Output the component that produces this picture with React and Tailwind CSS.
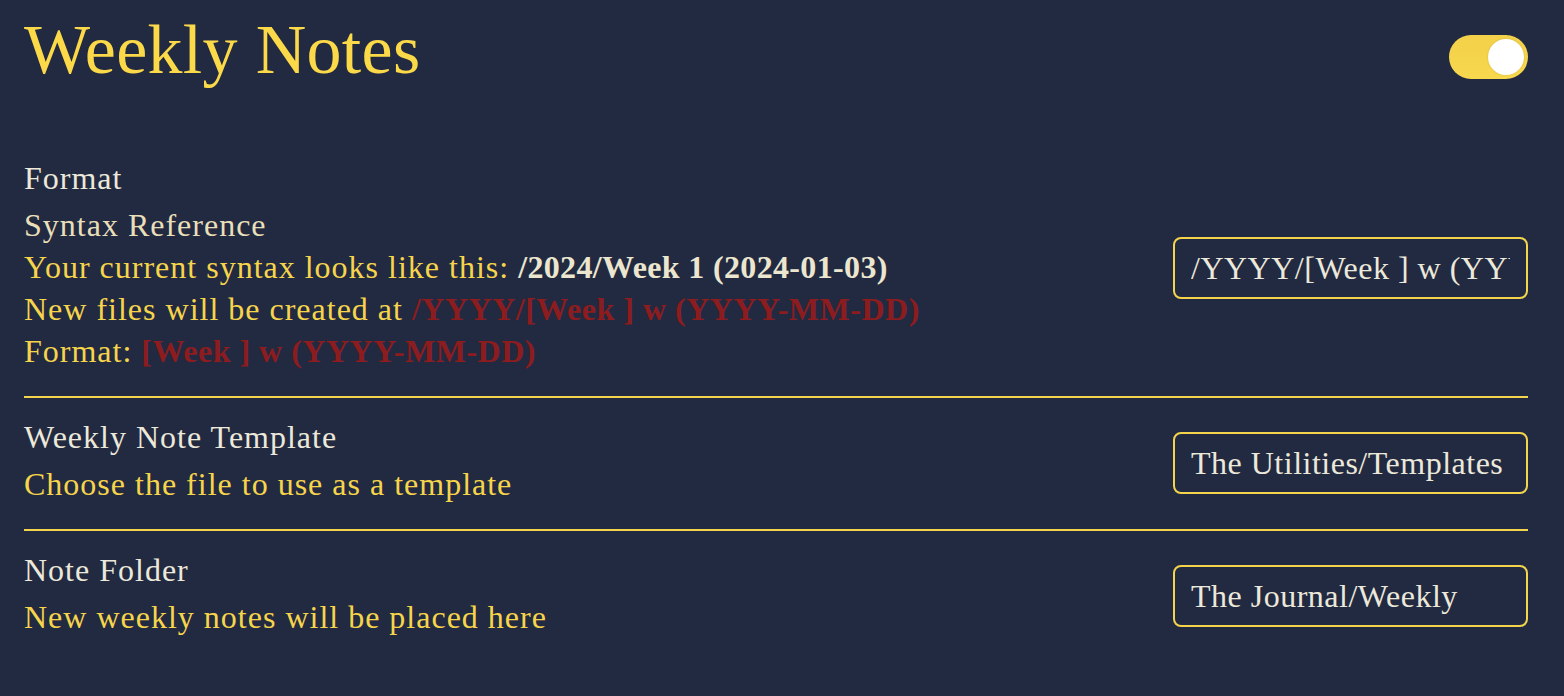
import React from "react";

const serif = { fontFamily: '"Liberation Serif", "Times New Roman", serif' };

function Field({ value }) {
  return (
    <input
      readOnly
      value={value}
      className="w-[355px] h-[62px] shrink-0 rounded-[8px] border-2 border-[#f3d44c] bg-transparent pl-[16px] pr-[16px] text-[32px] tracking-[0.5px] text-[#ece8da] outline-none"
      style={serif}
    />
  );
}

export default function App() {
  return (
    <div
      className="w-[1564px] h-[696px] overflow-hidden bg-[#222a42] pl-[24px] pr-[36px]"
      style={serif}
    >
      {/* Header */}
      <div className="flex items-start justify-between pt-[16px]">
        <h1 className="text-[70px] leading-[68px] tracking-[0.3px] text-[#fbd948]">Weekly Notes</h1>
        <div className="mt-[19px] flex h-[44px] w-[79px] items-center justify-end rounded-full bg-gradient-to-b from-[#f3d14a] to-[#f7d84d] pr-[4px]">
          <div className="h-[36px] w-[36px] rounded-full bg-white shadow-[0_0_2px_rgba(0,0,0,0.15)]" />
        </div>
      </div>

      {/* Format row */}
      <div className="mt-[73px] flex items-center justify-between border-b-2 border-[#f3d44c] pb-[24px]">
        <div className="text-[32px] leading-[42px] tracking-[1px]">
          <div className="mb-[5px] text-[#ece8da]">Format</div>
          <div className="text-[#e9dfb8]">Syntax Reference</div>
          <div className="text-[#f7d54b]">
            Your current syntax looks like this:{" "}
            <span className="font-bold tracking-[0.35px] text-[#ece6cf]">/2024/Week 1 (2024-01-03)</span>
          </div>
          <div className="text-[#f7d54b]">
            New files will be created at{" "}
            <span className="font-bold tracking-[0.5px] text-[#8c1c1e]">/YYYY/[Week ] w (YYYY-MM-DD)</span>
          </div>
          <div className="text-[#f7d54b]">
            Format:{" "}
            <span className="font-bold tracking-[0.5px] text-[#8c1c1e]">[Week ] w (YYYY-MM-DD)</span>
          </div>
        </div>
        <div className="mt-[7px]">
          <Field value="/YYYY/[Week ] w (YYYY-MM-DD)" />
        </div>
      </div>

      {/* Template row */}
      <div className="flex items-center justify-between border-b-2 border-[#f3d44c] pt-[18px] pb-[24px]">
        <div className="text-[32px] leading-[42px] tracking-[1px]">
          <div className="mb-[5px] text-[#ece8da]">Weekly Note Template</div>
          <div className="text-[#f7d54b]">Choose the file to use as a template</div>
        </div>
        <div className="mt-[5px]">
          <Field value="The Utilities/Templates" />
        </div>
      </div>

      {/* Folder row */}
      <div className="flex items-center justify-between pt-[18px]">
        <div className="text-[32px] leading-[42px] tracking-[1px]">
          <div className="mb-[5px] text-[#ece8da]">Note Folder</div>
          <div className="text-[#f7d54b]">New weekly notes will be placed here</div>
        </div>
        <div className="mt-[5px]">
          <Field value="The Journal/Weekly" />
        </div>
      </div>
    </div>
  );
}
